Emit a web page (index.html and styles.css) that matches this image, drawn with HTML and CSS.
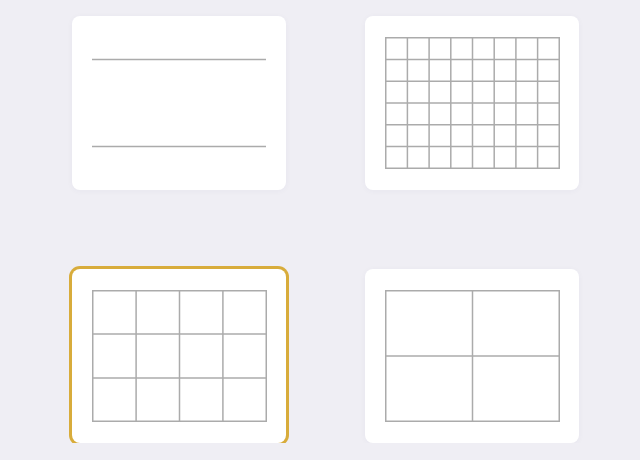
FILE: index.html
```html
<!DOCTYPE html>
<html>
<head>
<meta charset="utf-8">
<link rel="stylesheet" href="styles.css">
</head>
<body>
<div class="layouts">
  <div class="card">
    <svg class="pattern" viewBox="0 0 175 132" width="175" height="132">
      <line x1="0" y1="22.5" x2="174" y2="22.5"/>
      <line x1="0" y1="109.5" x2="174" y2="109.5"/>
    </svg>
  </div>
  <div class="card">
    <svg class="pattern" viewBox="0 0 175 132" width="175" height="132">
      <rect x="0.75" y="0.75" width="173.5" height="130.5"/>
      <line x1="22.4" y1="0" x2="22.4" y2="132"/>
      <line x1="44.1" y1="0" x2="44.1" y2="132"/>
      <line x1="65.8" y1="0" x2="65.8" y2="132"/>
      <line x1="87.5" y1="0" x2="87.5" y2="132"/>
      <line x1="109.2" y1="0" x2="109.2" y2="132"/>
      <line x1="130.9" y1="0" x2="130.9" y2="132"/>
      <line x1="152.6" y1="0" x2="152.6" y2="132"/>
      <line x1="0" y1="22.4" x2="175" y2="22.4"/>
      <line x1="0" y1="44.2" x2="175" y2="44.2"/>
      <line x1="0" y1="66" x2="175" y2="66"/>
      <line x1="0" y1="87.8" x2="175" y2="87.8"/>
      <line x1="0" y1="109.6" x2="175" y2="109.6"/>
    </svg>
  </div>
  <div class="card selected">
    <svg class="pattern" viewBox="0 0 175 132" width="175" height="132">
      <rect x="0.75" y="0.75" width="173.5" height="130.5"/>
      <line x1="44.1" y1="0" x2="44.1" y2="132"/>
      <line x1="87.5" y1="0" x2="87.5" y2="132"/>
      <line x1="130.9" y1="0" x2="130.9" y2="132"/>
      <line x1="0" y1="44" x2="175" y2="44"/>
      <line x1="0" y1="88" x2="175" y2="88"/>
    </svg>
  </div>
  <div class="card">
    <svg class="pattern" viewBox="0 0 175 132" width="175" height="132">
      <rect x="0.75" y="0.75" width="173.5" height="130.5"/>
      <line x1="87.5" y1="0" x2="87.5" y2="132"/>
      <line x1="0" y1="66" x2="175" y2="66"/>
    </svg>
  </div>
</div>
</body>
</html>
```
FILE: styles.css
```css
html, body {
  margin: 0;
  padding: 0;
  background: #efeef4;
  font-family: "Liberation Sans", Arial, sans-serif;
}
.layouts {
  display: grid;
  grid-template-columns: 214px 214px;
  grid-auto-rows: 174px;
  column-gap: 79px;
  row-gap: 79px;
  padding: 16px 0 0 72px;
}
.card {
  background: #ffffff;
  border-radius: 8px;
  box-shadow: 0 1px 6px rgba(60, 60, 90, 0.04);
  display: flex;
  align-items: center;
  justify-content: center;
}
.card.selected {
  box-shadow: 0 0 0 3px #d8ac3b;
  border-radius: 8px;
}
.pattern {
  display: block;
  fill: none;
  stroke: #ababab;
  stroke-width: 1.5;
}
```
